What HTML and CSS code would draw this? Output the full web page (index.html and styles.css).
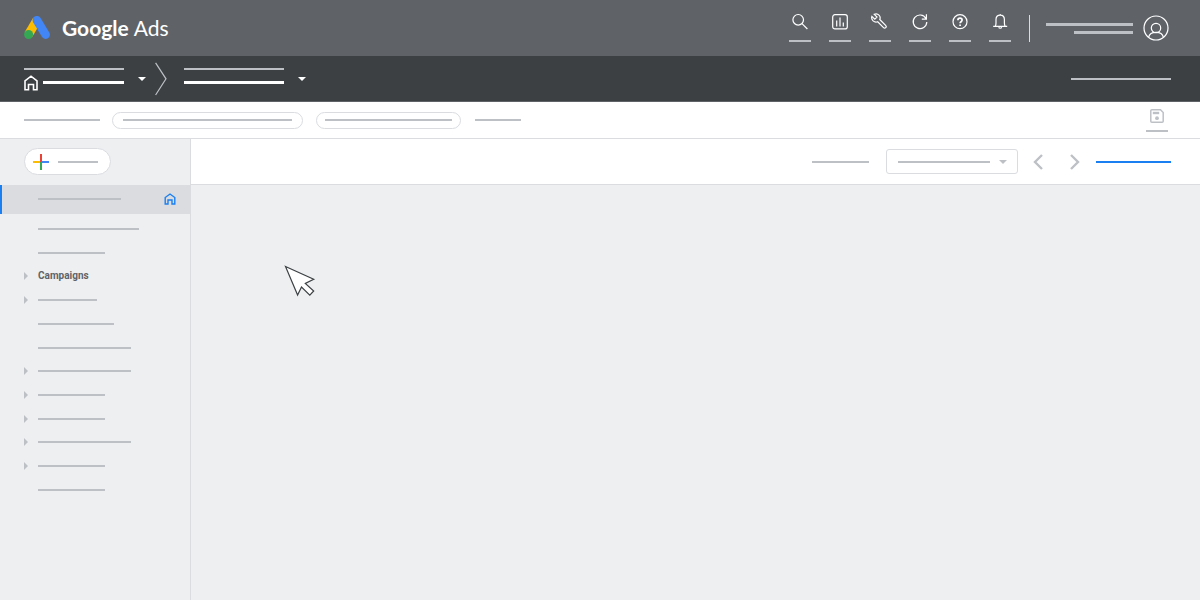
FILE: index.html
```html
<!DOCTYPE html>
<html lang="en">
<head>
<meta charset="utf-8">
<meta name="viewport" content="width=device-width, initial-scale=1">
<title>Google Ads</title>
<link rel="stylesheet" href="styles.css">
</head>
<body>
<header class="topbar">
  <a class="brand" href="#">
    <svg class="brand-mark" width="26" height="24" viewBox="0 0 26 24" aria-hidden="true">
      <path d="M13 4 4.500 18.500" stroke="#fbbc04" stroke-width="9" fill="none"/>
      <path d="M12.900 4.200 21.600 18.600" stroke="#4285f4" stroke-width="8.600" stroke-linecap="round" fill="none"/>
      <circle cx="4.600" cy="18.500" r="4.500" fill="#34a853"/>
    </svg>
    <span class="brand-name">Google</span>
    <span class="brand-product">Ads</span>
  </a>
  <nav class="tools" aria-label="Tools">
    <button class="tool" aria-label="Search">
      <svg class="icon" width="18" height="18" viewBox="0 0 18 18"><circle cx="7.200" cy="6.800" r="5.300"/><path d="m11 10.600 5.400 5.400"/></svg>
      <span class="tool-line"></span>
    </button>
    <button class="tool" aria-label="Reports">
      <svg class="icon" width="18" height="18" viewBox="0 0 18 18"><rect x="1.700" y="1.700" width="14.600" height="14.200" rx="2.200"/><path d="M5.700 7.500v6M9 4.600v8.900M12.300 9.500v4"/></svg>
      <span class="tool-line"></span>
    </button>
    <button class="tool" aria-label="Tools and settings">
      <svg class="icon" width="18" height="18" viewBox="0 0 18 18"><path d="M.9 3.400 3.800 6.200 6 4.100 3.200 1.300C5 .6 6.900 1 8 2.200c1.200 1.200 1.400 2.900.8 4.300l5.800 5.800c.9.900.9 1.600.2 2.300s-1.500.8-2.300 0L6.700 8.800C5.200 9.500 3.400 9.100 2.100 7.900.9 6.700.3 4.900.9 3.400z"/></svg>
      <span class="tool-line"></span>
    </button>
    <button class="tool" aria-label="Refresh">
      <svg class="icon" width="18" height="18" viewBox="0 0 18 18"><path d="M14.900 5.400A6.800 6.800 0 1 0 15.800 9M15.400 1.300v4.900h-4.600"/></svg>
      <span class="tool-line"></span>
    </button>
    <button class="tool" aria-label="Help">
      <svg class="icon" width="18" height="18" viewBox="0 0 18 18"><circle cx="9" cy="8.700" r="7"/><path stroke-width="1.700" d="M6.900 7.200c0-1.300.9-2 2.100-2s2.100.8 2.100 1.900c0 1.600-2 1.700-2 3.100M9.100 11.400v1.500"/></svg>
      <span class="tool-line"></span>
    </button>
    <button class="tool" aria-label="Notifications">
      <svg class="icon" width="18" height="18" viewBox="0 0 18 18"><path d="M2.200 13.300h14M4.200 13.300c.7-1 .8-2 .8-3.400V6.600c0-2.600 1.600-4.400 4.200-4.400s4.200 1.800 4.200 4.400v3.300c0 1.400.1 2.400.8 3.400M7.800 14.200c.2 1.400 2.600 1.400 2.800 0M9.200.9v1.300"/></svg>
      <span class="tool-line"></span>
    </button>
  </nav>
  <button class="account" aria-label="Account">
    <span class="account-lines"><span class="line thick w-87"></span><span class="line thick w-59"></span></span>
    <svg class="icon" width="26" height="26" viewBox="0 0 26 26"><circle cx="13" cy="13" r="12"/><circle cx="13" cy="13" r="4.700"/><path d="M5.600 22.300c.7-3.200 3.600-4.900 7.400-4.900s6.700 1.700 7.400 4.900"/></svg>
  </button>
</header>

<nav class="crumbs" aria-label="Accounts">
  <button class="crumb" aria-label="Manager account">
    <span class="crumb-lines">
      <span class="line w-100"></span>
      <span class="crumb-home">
        <svg class="icon heavy" width="14" height="16" viewBox="0 0 14 16"><path d="M1 14.700V5.900L7 1.200l6 4.700v8.800H9.500V9.500h-5v5.200z"/></svg>
        <span class="line thick white grow"></span>
      </span>
    </span>
    <span class="caret"></span>
  </button>
  <svg class="icon separator" width="12" height="34" viewBox="0 0 12 34" aria-hidden="true"><path d="m.6.800 10.400 16L.6 33"/></svg>
  <button class="crumb" aria-label="Client account">
    <span class="crumb-lines">
      <span class="line w-100"></span>
      <span class="crumb-home"><span class="line thick white grow"></span></span>
    </span>
    <span class="caret"></span>
  </button>
  <a class="crumb-end" href="#" aria-label="Account details"><span class="line w-100"></span></a>
</nav>

<div class="filters">
  <span class="line w-76"></span>
  <button class="pill pill-long" aria-label="Status filter"><span class="line grow"></span></button>
  <button class="pill pill-short" aria-label="Type filter"><span class="line grow"></span></button>
  <a href="#" aria-label="Add filter"><span class="line w-46"></span></a>
  <button class="save" aria-label="Save">
    <svg width="14" height="14" viewBox="0 0 14 14" fill="none" stroke="#bdc1c6" stroke-width="1.500"><path d="M1.800.8h8.700l2.700 2.700v8.700a1 1 0 0 1-1 1H1.800a1 1 0 0 1-1-1V1.800a1 1 0 0 1 1-1z"/><path d="M2.800 4h6.400" stroke-width="2.400"/><circle cx="7" cy="9.200" r="1.900" fill="#bdc1c6" stroke="none"/></svg>
    <span class="tool-line"></span>
  </button>
</div>

<div class="workspace">
  <aside class="sidebar">
    <button class="create" aria-label="Create">
      <svg width="16" height="16" viewBox="0 0 16 16"><path d="M0 7h7v2H0z" fill="#fbbc04"/><path d="M9 7h7v2H9z" fill="#4285f4"/><path d="M7 0h2v8H7z" fill="#ea4335"/><path d="M7 8h2v8H7z" fill="#34a853"/></svg>
      <span class="line w-40"></span>
    </button>
    <a class="overview" href="#" aria-label="Overview" aria-current="page">
      <span class="line w-83"></span>
      <svg class="icon home" width="12" height="12" viewBox="0 0 12 12"><path d="M1.200 11V4.500L6 1l4.800 3.500V11H8V7H4v4z"/></svg>
    </a>
    <ul class="menu">
      <li><a href="#" aria-label="Recommendations"><span class="line w-101"></span></a></li>
      <li><a href="#" aria-label="Insights"><span class="line w-67"></span></a></li>
      <li><a class="parent" href="#">Campaigns</a></li>
      <li><a class="parent" href="#" aria-label="Ad groups"><span class="line w-59"></span></a></li>
      <li><a href="#" aria-label="Ads"><span class="line w-76"></span></a></li>
      <li><a href="#" aria-label="Extensions"><span class="line w-93"></span></a></li>
      <li><a class="parent" href="#" aria-label="Landing pages"><span class="line w-93"></span></a></li>
      <li><a class="parent" href="#" aria-label="Keywords"><span class="line w-67"></span></a></li>
      <li><a class="parent" href="#" aria-label="Audiences"><span class="line w-67"></span></a></li>
      <li><a class="parent" href="#" aria-label="Demographics"><span class="line w-93"></span></a></li>
      <li><a class="parent" href="#" aria-label="Settings"><span class="line w-67"></span></a></li>
      <li><a href="#" aria-label="More"><span class="line w-67"></span></a></li>
    </ul>
  </aside>
  <main class="content">
    <div class="range">
      <label for="period" aria-label="Period"><span class="line w-57"></span></label>
      <span class="picker">
        <select id="period" aria-label="Period"><option value=""></option></select>
        <span class="picker-face"><span class="line grow"></span><span class="caret grey"></span></span>
      </span>
      <button class="step" aria-label="Previous period"><svg width="10" height="16" viewBox="0 0 10 16"><path d="M9 1 2 8l7 7"/></svg></button>
      <button class="step step-next" aria-label="Next period"><svg width="10" height="16" viewBox="0 0 10 16"><path d="m1 1 7 7-7 7"/></svg></button>
      <a href="#" aria-label="Show last 30 days"><span class="line blue w-75"></span></a>
    </div>
    <svg class="pointer" width="32" height="32" viewBox="0 0 32 32" aria-hidden="true"><path d="m1.500 1.500 28.200 12.800-8.400 4.100 8.400 7.600-3.900 4.200-8.300-8.200-3.900 8z" fill="#fff" stroke="#3c4043" stroke-width="1.200"/></svg>
  </main>
</div>
</body>
</html>
```
FILE: styles.css
```css
* { box-sizing: border-box; }

body {
  margin: 0;
  min-height: 100vh;
  display: flex;
  flex-direction: column;
  background: #eeeff1;
  font-family: Roboto, sans-serif;
}

button {
  margin: 0;
  padding: 0;
  border: 0;
  background: none;
  cursor: pointer;
}

a { color: inherit; text-decoration: none; }
svg { display: block; flex: none; }

.icon { fill: none; stroke: #fff; stroke-width: 1.2; }
.icon.heavy { stroke-width: 1.6; }
.icon.home { stroke: #1a7ff0; stroke-width: 1.4; }
.icon.separator { stroke: #bdc1c6; margin-left: 9px; }

/* Placeholder strokes */
.line { display: block; flex: none; height: 2px; background: #bdc1c6; }
.line.thick { height: 3px; }
.line.white { background: #fff; }
.line.blue { background: #1a7ff0; }
.line.grow { flex: 1; }
.w-40 { width: 40px; }
.w-46 { width: 46px; }
.w-57 { width: 57px; }
.w-59 { width: 59px; }
.w-67 { width: 67px; }
.w-75 { width: 75px; }
.w-76 { width: 76px; }
.w-83 { width: 83px; }
.w-87 { width: 87px; }
.w-93 { width: 93px; }
.w-100 { width: 100px; }
.w-101 { width: 101px; }

.caret {
  border: 4px solid transparent;
  border-top-color: #fff;
  border-bottom: 0;
}
.caret.grey { border-top-color: #bdc1c6; }

/* Top bar */
.topbar {
  display: flex;
  align-items: center;
  height: 56px;
  padding: 0 31px 0 24px;
  background: #5f6368;
}
.brand {
  display: flex;
  align-items: baseline;
  margin-right: auto;
  color: #fff;
  font-family: Lato, sans-serif;
  font-size: 21px;
  line-height: 28px;
}
.brand-mark { align-self: center; margin-right: 12px; }
.brand-name { font-weight: 700; }
.brand-product { margin-left: 5px; font-weight: 400; }
.tools { display: flex; gap: 18px; padding-bottom: 2px; }
.tool, .save {
  display: flex;
  flex-direction: column;
  align-items: center;
  width: 22px;
}
.tool { gap: 9px; }
.tool-line { width: 100%; height: 2px; background: #bdc1c6; }
.account {
  display: flex;
  align-items: center;
  gap: 10px;
  margin-left: 18px;
}
.account::before {
  content: "";
  width: 1px;
  height: 27px;
  margin-right: 6px;
  background: #dadce0;
}
.account-lines {
  display: flex;
  flex-direction: column;
  align-items: flex-end;
  gap: 5px;
}

/* Account breadcrumbs */
.crumbs {
  display: flex;
  align-items: center;
  height: 46px;
  padding: 1px 29px 0 24px;
  border-bottom: 1px solid #5f6368;
  background: #3c4043;
}
.crumb { display: flex; align-items: center; gap: 14px; }
.separator + .crumb { margin-left: 17px; }
.crumb-lines { display: flex; flex-direction: column; gap: 5px; }
.crumb-home { display: flex; align-items: center; gap: 5px; height: 16px; }
.crumb-end { margin-left: auto; }

/* Filter bar */
.filters {
  display: flex;
  align-items: center;
  height: 37px;
  padding: 0 32px 0 24px;
  border-bottom: 1px solid #dadce0;
  background: #fff;
}
.pill {
  display: flex;
  align-items: center;
  height: 17px;
  border: 1px solid #dadce0;
  border-radius: 9px;
}
.pill-long { width: 191px; margin: 0 13px 0 12px; padding: 0 10px; }
.pill-short { width: 145px; margin-right: 14px; padding: 0 8px; }
.save { gap: 7px; margin-left: auto; }

/* Sidebar */
.workspace { flex: 1; display: flex; }
.sidebar { flex: none; width: 191px; border-right: 1px solid #dadce0; }
.create {
  display: flex;
  align-items: center;
  gap: 9px;
  width: 87px;
  height: 27px;
  margin: 9px 0 10px 24px;
  padding-left: 8px;
  border: 1px solid #dadce0;
  border-radius: 14px;
  background: #fff;
}
.overview {
  display: flex;
  align-items: center;
  justify-content: space-between;
  height: 29px;
  padding: 0 14px 2px 36px;
  border-left: 2px solid #1a7ff0;
  background: #dadce0;
}
.menu {
  display: flex;
  flex-direction: column;
  justify-content: space-between;
  height: 281px;
  margin: 5px 0 0;
  padding: 0 0 0 24px;
  list-style: none;
  color: #5f6368;
  font-size: 10px;
  font-weight: 700;
  line-height: 20px;
}
.menu a { display: flex; align-items: center; height: 20px; }
.menu a::before {
  content: "";
  margin-right: 10px;
  border: 4px solid transparent;
  border-right: 0;
}
.menu .parent::before { border-left-color: #bdc1c6; }

/* Content */
.content { position: relative; flex: 1; min-width: 0; }
.range {
  display: flex;
  align-items: center;
  justify-content: flex-end;
  height: 46px;
  padding-right: 29px;
  border-bottom: 1px solid #dadce0;
  background: #fff;
}
.picker { position: relative; width: 132px; height: 25px; margin: 0 15px 0 17px; }
.picker select {
  appearance: none;
  width: 100%;
  height: 100%;
  border: 1px solid #dadce0;
  border-radius: 3px;
  background: #fff;
}
.picker-face {
  position: absolute;
  inset: 0;
  display: flex;
  align-items: center;
  gap: 9px;
  padding: 0 11px 0 12px;
  pointer-events: none;
}
.step svg { fill: none; stroke: #bdc1c6; stroke-width: 2.4; }
.step-next { margin: 0 16px 0 27px; }
.pointer { position: absolute; left: 93px; top: 126px; }
```
